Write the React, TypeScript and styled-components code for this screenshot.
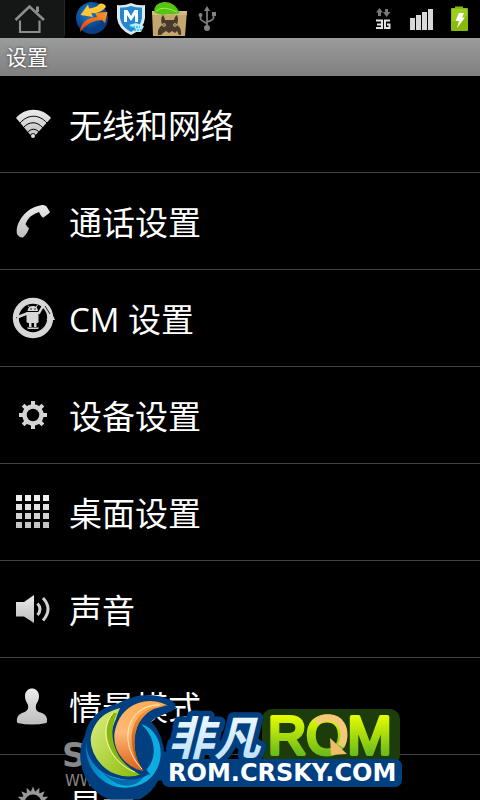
import React from "react";
import styled, { createGlobalStyle } from "styled-components";

const GlobalStyle = createGlobalStyle`
  * { box-sizing: border-box; }
  html, body { margin: 0; background: #000; }
  body { font-family: "Open Sans", "Noto Sans CJK SC", sans-serif; color: #fff; }
`;

const Screen = styled.main`
  position: relative;
  height: 100vh;
  overflow: hidden;
  background: #000;
`;

const StatusBar = styled.header`
  display: flex;
  height: 38px;
  background: #000;
`;

const HomeButton = styled.button`
  width: 65px;
  height: 38px;
  padding: 0;
  border: 0;
  border-right: 1px solid #242824;
  border-bottom-right-radius: 4px;
  background: #141715;
`;

const Notifications = styled.div`
  display: flex;
  flex: 1;
  padding-left: 9px;
`;

const Indicators = styled.div`
  display: flex;
  padding-right: 2px;
`;

const StatusSvg = styled.svg`
  display: block;
  width: 38px;
  height: 38px;
`;

const HomeSvg = styled.svg`
  display: block;
  width: 64px;
  height: 38px;
`;

const TitleBar = styled.h1`
  margin: 0;
  height: 38px;
  padding: 0 6px;
  background: linear-gradient(#9c9c9c, #7f7f7f);
  font-size: 21px;
  font-weight: 400;
  line-height: 38px;
  text-shadow: 0 0 3px #333;
`;

const List = styled.ul`
  margin: 0;
  padding: 0;
  list-style: none;
`;

const Item = styled.li`
  border-bottom: 1px solid #434343;
`;

const RowButton = styled.button`
  display: flex;
  align-items: center;
  gap: 12px;
  width: 100%;
  height: 96px;
  padding: 0 9px;
  border: 0;
  background: transparent;
  color: #fff;
  font-family: inherit;
  font-size: 33px;
  text-align: left;
`;

const RowLabel = styled.span`
  padding-top: 4px;
  font-weight: 400;
  line-height: 48px;
  white-space: nowrap;
`;

const RowSvg = styled.svg`
  flex: none;
  width: 48px;
  height: 48px;
`;

const Watermark = styled.div`
  position: absolute;
  left: 50px;
  bottom: 0;
  pointer-events: none;
`;

const WatermarkSvg = styled.svg`
  display: block;
  width: 360px;
  height: 110px;
`;

const teeth = [0, 45, 90, 135, 180, 225, 270, 315];
const spikes = Array.from({ length: 16 }, (_, i) => i * 22.5);
const cells = [0, 1, 2, 3];
const cellShades = ["#f0f0f0", "#e2e2e2", "#d2d2d2", "#c4c4c4"];

const Wifi = () => (
  <>
    <path d="M7 18C16 7 33 7 42 18L24 38Z" fill="url(#metal)" />
    <g fill="none" stroke="#000" strokeWidth="1">
      <path d="M11 23C19 14 30 14 38 23" />
      <path d="M14 28C20 21 28 21 34 28" />
      <path d="M18 33C22 28 27 28 31 33" />
    </g>
    <circle cx="24" cy="36" r="2.800" fill="#000" />
    <circle cx="24" cy="36" r="2" fill="#ddd" />
  </>
);

const Phone = () => (
  <path
    d="M33 8Q36 7.500 37.500 9.500L41 15Q40.500 16 34.500 20.500Q32.500 20.500 30 15Q20 18 16.500 27Q18 30 20 31Q19 36 14 40.500Q11 41 8.500 38Q6.500 34 9 27Q16 11 33 8Z"
    fill="url(#metal)"
  />
);

const Mod = () => (
  <>
    <circle cx="24" cy="24" r="17.200" fill="none" stroke="#d7d7d7" strokeWidth="6" />
    <path d="M42 17L37.500 26H46Z" fill="#d7d7d7" />
    <path d="M36 12L41 20M10 22L7 24" stroke="#222" strokeWidth="1" />
    <g fill="#d7d7d7">
      <path d="M18.500 17Q19 12 24 12Q28.500 12 29 17Z" />
      <path d="M17.500 18H29.500V28Q29.500 29 28 29H19.500Q18 29 17.500 28Z" />
      <path d="M20 28H22.500V33H20ZM25 28H27.500V33H25Z" />
      <path d="M18 33.500H30L29 35H19Z" />
    </g>
    <path d="M18 19.500L9 23M30 19L34 12" stroke="#d7d7d7" strokeWidth="2.500" strokeLinecap="round" />
    <path d="M19 11.500L21 14M28.500 11L27 13.500" stroke="#d7d7d7" strokeWidth="1" />
    <circle cx="22" cy="15" r=".8" fill="#111" />
    <circle cx="26" cy="15" r=".8" fill="#111" />
  </>
);

const Gear = () => (
  <>
    <circle cx="24" cy="24" r="8.500" fill="none" stroke="#d2d2d2" strokeWidth="4.500" />
    {teeth.map((a) => (
      <path key={a} d="M22 10H26V15H22Z" fill="#d6d6d6" transform={`rotate(${a} 24 24)`} />
    ))}
  </>
);

const Grid = () => (
  <>
    {cells.map((r) =>
      cells.map((c) => (
        <rect key={`${r}${c}`} x={7 + c * 9} y={7 + r * 9} width="6" height="6" fill={cellShades[r]} />
      ))
    )}
  </>
);

const Speaker = () => (
  <>
    <path d="M7 17H15L25 10V38L15 31.500H7Z" fill="url(#metal)" />
    <path d="M28.500 18.500Q33.500 24 28.500 30" fill="none" stroke="#d0d0d0" strokeWidth="3" />
    <path d="M34 13Q44 24 34 35.500" fill="none" stroke="#d0d0d0" strokeWidth="3" />
  </>
);

const Person = () => (
  <path
    d="M16 14C16 4 30 4 30 14C30 19 28 20 27 23C26 29 29 30 33 31C38 33 39 38 37.500 41Q23 44 8.500 41C7 38 8 33 13 31C17 30 20 28 19 23C18 20 16 19 16 14Z"
    fill="url(#metal)"
  />
);

const Sun = () => (
  <>
    <circle cx="24" cy="24" r="10" fill="none" stroke="#999" strokeWidth="3" />
    {spikes.map((a) => (
      <path key={a} d="M21.500 13.500L24 7.500L26.500 13.500Z" fill="#999" transform={`rotate(${a} 24 24)`} />
    ))}
  </>
);

const items: { label: string; Icon: () => React.ReactElement }[] = [
  { label: "无线和网络", Icon: Wifi },
  { label: "通话设置", Icon: Phone },
  { label: "CM 设置", Icon: Mod },
  { label: "设备设置", Icon: Gear },
  { label: "桌面设置", Icon: Grid },
  { label: "声音", Icon: Speaker },
  { label: "情景模式", Icon: Person },
  { label: "显示", Icon: Sun },
];

const Home = () => (
  <HomeSvg viewBox="0 0 64 38" fill="none" stroke="#8c8c8c" strokeWidth="2.200">
    <path d="M15.500 20L29.500 6.500L44 20" strokeWidth="2.600" />
    <path d="M37.500 12V6.500" strokeWidth="3" />
    <path d="M20 20.500V32H39.500V20.500" />
  </HomeSvg>
);

const Swirl = () => (
  <StatusSvg viewBox="0 0 38 38">
    <defs>
      <radialGradient id="ball" cx=".4" cy=".35">
        <stop offset="0" stopColor="#1784d0" />
        <stop offset="1" stopColor="#073f86" />
      </radialGradient>
      <linearGradient id="flame" x1="0" y1="1" x2="1" y2="0">
        <stop offset="0" stopColor="#e43b05" />
        <stop offset="1" stopColor="#ff9a2b" />
      </linearGradient>
    </defs>
    <circle cx="18" cy="18" r="16" fill="url(#ball)" />
    <path d="M6.500 15L14 4.500L15 8.500Q22 8 26 3.500Q31 3 32 7Q26 14 17 13L19 17Z" fill="#ffc737" />
    <path d="M6 32Q7 18 23 17L21 13L33.500 12L31 23L28 20Q15 20 6 32Z" fill="url(#flame)" />
  </StatusSvg>
);

const Shield = () => (
  <StatusSvg viewBox="0 0 38 38">
    <path d="M19 3Q26 6 33 5V18Q32 29 19 35Q6 29 5 18V5Q12 6 19 3Z" fill="#dfe9ef" />
    <path d="M19 6Q25 8 30 7.500V18Q29 27 19 32Q9 27 8 18V7.500Q13 8 19 6Z" fill="#2388d2" />
    <path d="M12 22V10H15.500L19 16L22.500 10H26V22H23V15L19 21L15 15V22Z" fill="#fff" />
    <path d="M17 25L24 23L32 26L29 32H22L24 29Z" fill="#b8edff" />
    <path d="M18 27H28M22 30H31" stroke="#30b5e8" strokeWidth="1.500" strokeDasharray="2 1" />
  </StatusSvg>
);

const Totoro = () => (
  <StatusSvg viewBox="0 0 38 38">
    <path d="M2 11H37L35 36H3Z" fill="#c4a66e" />
    <path d="M2 11H37L36.500 15H2.300Z" fill="#d6ba83" />
    <path d="M4 12Q4 3 14 2Q24 1 30 13Q24 15 18 14Q9 16 4 12Z" fill="#55c515" />
    <path d="M6 11Q13 5 27 12" fill="none" stroke="#a3ee46" strokeWidth="1" />
    <path d="M8 35Q7 29 12 25Q10 18 13 15Q15 18 15 20H24Q24 17 27 15Q29 19 27 25Q32 28 31 35H29L27 31L25 33L22 31L19 33L16 31L13 33L11 35Z" fill="#493a2b" />
    <circle cx="14" cy="25" r="1.800" fill="#e0c88d" />
    <circle cx="25" cy="25" r="1.800" fill="#e0c88d" />
    <circle cx="14" cy="25" r=".8" fill="#222" />
    <circle cx="25" cy="25" r=".8" fill="#222" />
  </StatusSvg>
);

const Usb = () => (
  <StatusSvg viewBox="0 0 38 38" fill="none" stroke="#818181" strokeWidth="1.700">
    <path d="M19 28V8M12.500 16V19Q12.500 20 19 23.500M25.500 15V18Q25.500 20 19 22" />
    <path d="M16 11L19 6L22 11Z" fill="#818181" stroke="none" />
    <circle cx="19" cy="28" r="3" fill="#818181" stroke="none" />
    <circle cx="12.500" cy="15" r="2" fill="#818181" stroke="none" />
    <rect x="24" y="12" width="4" height="4" fill="#818181" stroke="none" />
  </StatusSvg>
);

const Data3G = () => (
  <StatusSvg viewBox="0 0 38 38">
    <path d="M12 12.500L15.500 8L19 12.500H17V16H14V12.500Z" fill="#777" />
    <path d="M19 12H21V9H24V12H26.500L22.500 17Z" fill="#777" />
    <g fill="none" stroke="#e2e2e2" strokeWidth="2">
      <path d="M12 20.500H18V28H12M13 24.500H18" />
      <path d="M26 20.500H21V28H25.500V24.500H23" />
    </g>
  </StatusSvg>
);

const Signal = () => (
  <StatusSvg viewBox="0 0 38 38" fill="#d8d8d8">
    <rect x="8" y="18" width="5" height="12" />
    <rect x="14" y="15" width="5" height="15" />
    <rect x="20" y="12" width="5" height="18" />
    <rect x="26" y="9" width="5" height="21" />
  </StatusSvg>
);

const Battery = () => (
  <StatusSvg viewBox="0 0 38 38">
    <path d="M11 9Q11 8 12 8H15V6.500H23V8H27Q28 8 28 9V30Q28 31 27 31H12Q11 31 11 30Z" fill="#87ba0b" />
    <path d="M12 9H27V16L12 22Z" fill="#9bcd20" />
    <path d="M19 13H24L22 17.500H25L17 28L19 21H15.500Z" fill="#fff" />
  </StatusSvg>
);

const SharedGradients = () => (
  <defs>
    <linearGradient id="metal" x1="0" y1="0" x2="0" y2="1">
      <stop offset="0" stopColor="#ececec" />
      <stop offset="1" stopColor="#bdbdbd" />
    </linearGradient>
    <linearGradient id="leaf" x1="0" y1="0" x2="1" y2="1">
      <stop offset="0" stopColor="#e0f28a" />
      <stop offset="1" stopColor="#86b800" />
    </linearGradient>
    <linearGradient id="amber" x1="0" y1="0" x2="0" y2="1">
      <stop offset="0" stopColor="#ffad55" />
      <stop offset=".45" stopColor="#ffb877" />
      <stop offset="1" stopColor="#d65c10" />
    </linearGradient>
    <linearGradient id="rust" x1="0" y1="0" x2="0" y2="1">
      <stop offset="0" stopColor="#ff9836" />
      <stop offset="1" stopColor="#b74404" />
    </linearGradient>
    <linearGradient id="sea" x1="0" y1="0" x2="1" y2="0">
      <stop offset="0" stopColor="#0878c4" />
      <stop offset=".5" stopColor="#05b8dd" />
      <stop offset="1" stopColor="#0fa8e2" />
    </linearGradient>
    <linearGradient id="ice" x1="0" y1="0" x2="0" y2="1">
      <stop offset="0" stopColor="#fff" />
      <stop offset="1" stopColor="#b4dcf7" />
    </linearGradient>
    <linearGradient id="lime" gradientUnits="userSpaceOnUse" x1="0" y1="714" x2="0" y2="758">
      <stop offset="0" stopColor="#eaff00" />
      <stop offset="1" stopColor="#60b51c" />
    </linearGradient>
  </defs>
);

const RomLogo = () => (
  <WatermarkSvg viewBox="50 690 360 110">
    <SharedGradients />
    <g fill="#888">
      <text x="62" y="767" fontSize="33" fontFamily="DejaVu Sans" fontWeight="700">S</text>
      <text x="65" y="786" fontSize="15" fontFamily="DejaVu Sans">WW</text>
    </g>

    <g fill="#003f80" stroke="#003f80" strokeWidth="11" strokeLinejoin="round">
      <path d="M170 706C150 695 130 703 121 708C100 713 92 724 90 738C78 760 93 790 112 794H138C150 788 162 770 158 747C156 736 150 727 144 723C147 714 158 711 170 706Z" />
      <path d="M152 757H178V775H152Z" />
    </g>
    <path d="M86 742C88 777 126 786 144 772C158 760 157 738 141 724C164 731 168 765 147 781C120 799 83 779 86 742Z" fill="url(#sea)" />
    <path d="M101 771C119 785 139 781 148 768C141 790 119 792 101 771Z" fill="#066bad" />
    <g stroke="#003f80" strokeWidth="3">
      <path d="M123 706C94 711 84 735 92 753C102 775 124 783 144 775C121 765 108 731 123 706Z" fill="url(#leaf)" />
      <path d="M173 707C153 692 119 699 113 733C111 753 126 771 147 773C132 755 131 725 151 712Q161 706 173 707Z" fill="url(#amber)" />
    </g>
    <path d="M113 713C99 731 109 762 139 774C118 764 105 738 117 713Z" fill="#87b60d" />
    <path d="M165 706C135 705 121 736 141 769C129 745 134 719 153 709Z" fill="url(#rust)" />
    <path d="M160 705C128 704 116 742 142 769M113 713C96 733 111 763 135 772" fill="none" stroke="#fff0b0" strokeWidth="1" />

    <rect x="262" y="709" width="138" height="56" rx="10" fill="#1c3c0b" />
    <rect x="162" y="759" width="240" height="28" rx="7" fill="#003f80" />
    <g strokeLinejoin="round" paintOrder="stroke">
      <text x="168" y="755" fontFamily="Noto Sans CJK SC" fontSize="46" fontWeight="700" fontStyle="italic" fill="url(#ice)" stroke="#003f80" strokeWidth="11">
        非凡
      </text>
      <text x="268" y="754" fontFamily="Liberation Sans" fontSize="53" fill="url(#lime)" stroke="url(#lime)" strokeWidth="4">
        ROM
      </text>
    </g>
    <text x="168" y="781" fontFamily="DejaVu Sans" fontSize="24" fontWeight="700" fill="#fff">
      ROM.CRSKY.COM
    </text>
    <path d="M316 722C324 716 336 716 341 724C345 730 345 739 341 746" fill="none" stroke="#f4c878" strokeWidth="7" />
    <path d="M330 738L347 754L331 755Z" fill="#efbd67" />
  </WatermarkSvg>
);

export default function App() {
  return (
    <Screen>
      <GlobalStyle />
      <StatusBar>
        <HomeButton aria-label="主屏幕">
          <Home />
        </HomeButton>
        <Notifications>
          <Swirl />
          <Shield />
          <Totoro />
          <Usb />
        </Notifications>
        <Indicators>
          <Data3G />
          <Signal />
          <Battery />
        </Indicators>
      </StatusBar>
      <TitleBar>设置</TitleBar>
      <List>
        {items.map(({ label, Icon }) => (
          <Item key={label}>
            <RowButton type="button">
              <RowSvg viewBox="0 0 48 48" aria-hidden="true">
                <Icon />
              </RowSvg>
              <RowLabel>{label}</RowLabel>
            </RowButton>
          </Item>
        ))}
      </List>
      <Watermark>
        <RomLogo />
      </Watermark>
    </Screen>
  );
}
